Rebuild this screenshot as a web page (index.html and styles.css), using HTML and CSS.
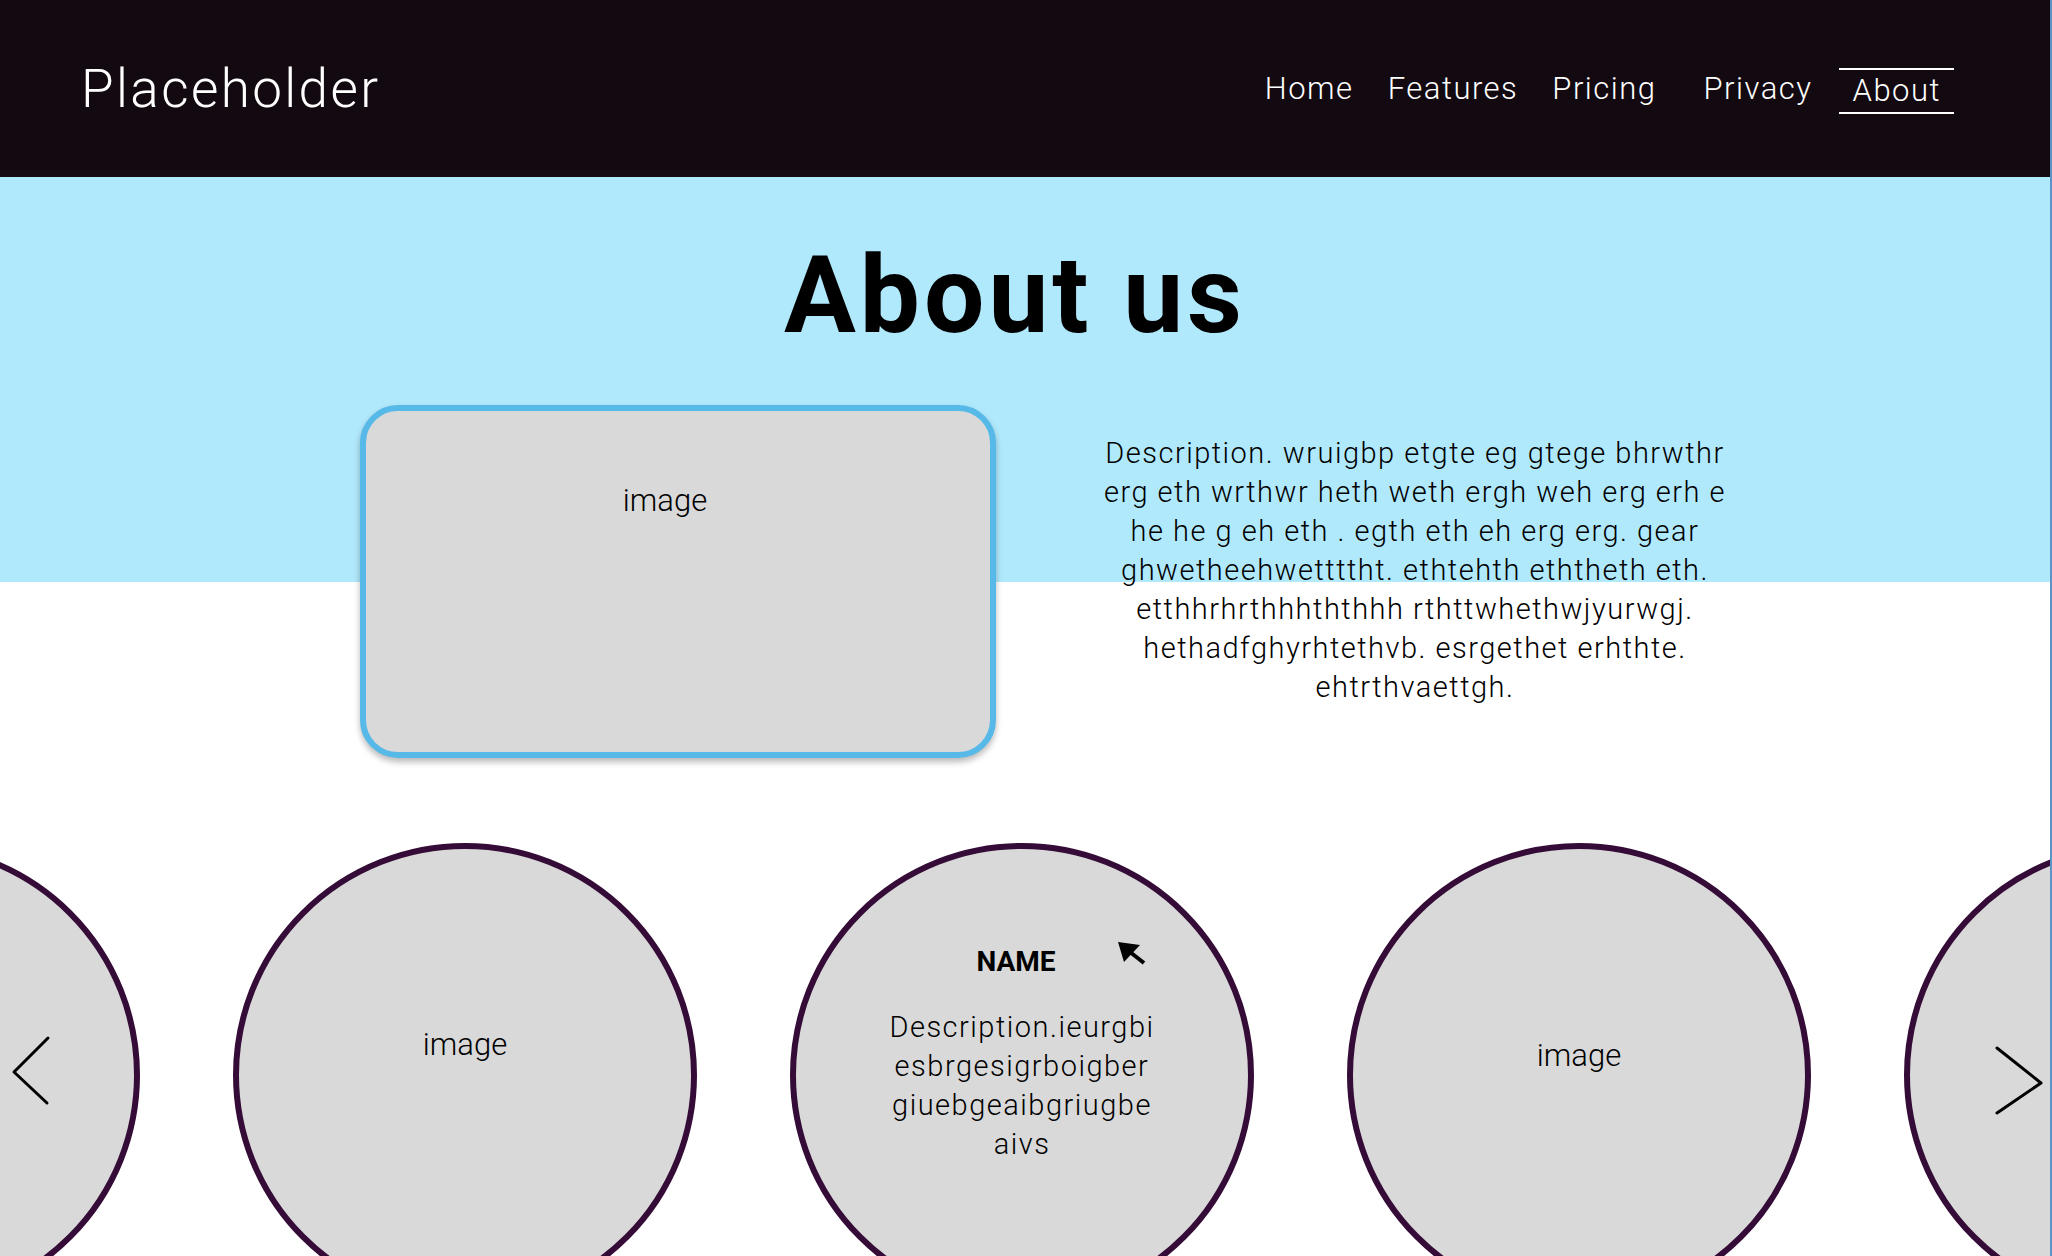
FILE: index.html
```html
<!DOCTYPE html>
<html lang="en">
<head>
<meta charset="utf-8">
<title>About us</title>
<link rel="stylesheet" href="styles.css">
</head>
<body>
<div class="page">
  <header class="topbar">
    <div class="logo">Placeholder</div>
    <nav class="nav">
      <a class="nav-link" href="#">Home</a>
      <a class="nav-link" href="#">Features</a>
      <a class="nav-link" href="#">Pricing</a>
      <a class="nav-link nav-link--wide" href="#">Privacy</a>
      <a class="nav-link nav-link--active" href="#">About</a>
    </nav>
  </header>

  <main>
    <section class="about">
      <h1 class="about-title">About us</h1>
      <div class="about-row">
        <div class="photo-card">image</div>
        <p class="about-text">Description. wruigbp etgte eg gtege bhrwthr<br>erg eth wrthwr heth weth ergh weh erg erh e<br>he he g eh eth . egth eth eh erg erg. gear<br>ghwetheehwettttht. ethtehth eththeth eth.<br>etthhrhrthhhththhh rthttwhethwjyurwgj.<br>hethadfghyrhtethvb. esrgethet erhthte.<br>ehtrthvaettgh.</p>
      </div>
    </section>

    <section class="team">
      <div class="team-track">
        <div class="member"></div>
        <div class="member member--a"><span class="member-label">image</span></div>
        <div class="member member--active">
          <svg class="cursor" viewBox="0 0 30 26" width="30" height="26" aria-hidden="true">
            <path d="M2 2 L24 5 L8 22 Z" fill="#000"/>
            <path d="M14 12 L28 23" stroke="#000" stroke-width="4"/>
          </svg>
          <h2 class="member-name">NAME</h2>
          <p class="member-desc">Description.ieurgbi<br>esbrgesigrboigber<br>giuebgeaibgriugbe<br>aivs</p>
        </div>
        <div class="member member--b"><span class="member-label">image</span></div>
        <div class="member"></div>
      </div>
      <svg class="arrow arrow--prev" viewBox="0 0 42 72" width="42" height="72" aria-hidden="true">
        <path d="M38 3 L4 37 L37 68" fill="none" stroke="#000" stroke-width="3" stroke-linecap="round" stroke-linejoin="round"/>
      </svg>
      <svg class="arrow arrow--next" viewBox="0 0 52 72" width="52" height="72" aria-hidden="true">
        <path d="M4 3 L48 38 L4 68" fill="none" stroke="#000" stroke-width="3" stroke-linecap="round" stroke-linejoin="round"/>
      </svg>
    </section>
  </main>
</div>
</body>
</html>
```

FILE: styles.css
```css
html, body {
  margin: 0;
  padding: 0;
  background: #ffffff;
}

body {
  font-family: Roboto, "Noto Sans", "Liberation Sans", sans-serif;
  color: #000;
}

.page {
  width: 2052px;
  height: 1256px;
  overflow: hidden;
  box-sizing: border-box;
  border-right: 2px solid #5a93c8;
}

/* Header */
.topbar {
  height: 177px;
  background: #130a11;
  display: flex;
  align-items: center;
  justify-content: space-between;
  padding: 0 96px 0 81px;
}

.logo {
  color: #fff;
  font-size: 53px;
  font-weight: 300;
  letter-spacing: 2.4px;
}

.nav {
  display: flex;
  align-items: center;
  gap: 34px;
}

.nav-link {
  color: #fff;
  text-decoration: none;
  font-size: 31px;
  font-weight: 300;
  letter-spacing: 1.5px;
}

.nav-link--wide {
  margin-left: 13px;
}

.nav-link--active {
  margin-left: -8px;
  padding: 2px 13px 3px 14px;
  border-top: 2px solid #fff;
  border-bottom: 2px solid #fff;
  margin-top: 4px;
}

/* About section */
.about {
  background: linear-gradient(to bottom, #b1e9fc 0, #b1e9fc 405px, #ffffff 405px);
  padding-top: 65px;
}

.about-title {
  margin: 0;
  font-size: 107px;
  line-height: 1;
  font-weight: 700;
  letter-spacing: 4px;
  text-align: center;
  padding-right: 20px;
}

.about-row {
  display: flex;
  align-items: flex-start;
  gap: 104px;
  margin-top: 56px;
  padding-left: 360px;
}

.photo-card {
  flex: none;
  width: 636px;
  height: 353px;
  box-sizing: border-box;
  border: 6px solid #56b9e8;
  border-radius: 38px;
  background: #d9d9d9;
  box-shadow: 0 4px 6px rgba(0, 0, 0, 0.28);
  text-align: center;
  padding: 71px 26px 0 0;
  font-size: 31px;
  line-height: 1.2;
  font-weight: 300;
}

.about-text {
  margin: 29px 0 0 0;
  width: 630px;
  text-align: center;
  font-size: 29px;
  line-height: 39px;
  font-weight: 300;
  letter-spacing: 1.5px;
  white-space: nowrap;
}

/* Team carousel */
.team {
  position: relative;
  margin-top: 85px;
}

.team-track {
  display: flex;
  justify-content: center;
  gap: 93px;
  padding-right: 6px;
}

.member {
  flex: none;
  position: relative;
  width: 464px;
  height: 464px;
  box-sizing: border-box;
  border: 6px solid #350b37;
  border-radius: 50%;
  background: #d9d9d9;
  text-align: center;
}

.member-label {
  display: block;
  font-size: 31px;
  line-height: 1.2;
  font-weight: 300;
}

.member--a {
  padding-top: 177px;
}

.member--b {
  padding-top: 188px;
}

.member--active {
  padding-top: 96px;
}

.member-name {
  margin: 0;
  font-size: 28px;
  line-height: 1.2;
  font-weight: 700;
  padding-right: 12px;
}

.member-desc {
  margin: 29px 0 0 0;
  font-size: 29px;
  line-height: 39px;
  font-weight: 300;
  letter-spacing: 1.5px;
}

.cursor {
  position: absolute;
  left: 320px;
  top: 91px;
}

.arrow {
  position: absolute;
}

.arrow--prev {
  left: 10px;
  top: 192px;
}

.arrow--next {
  left: 1993px;
  top: 202px;
}
```
